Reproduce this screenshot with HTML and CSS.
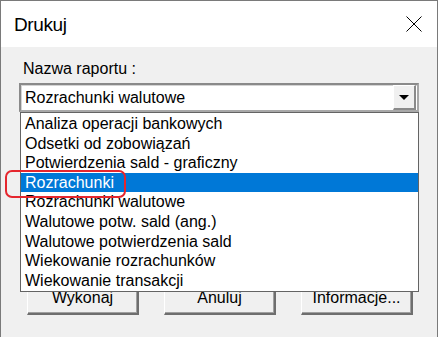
FILE: index.html
```html
<!DOCTYPE html>
<html lang="pl">
<head>
    <meta charset="UTF-8">
    <title>Drukuj</title>
    <link rel="stylesheet" href="styles.css">
</head>
<body>
    <div class="window">
        <div class="titlebar">
            <span class="title">Drukuj</span>
            <svg class="close" width="16" height="16" viewBox="0 0 16 16">
                <path d="M0.5 0.5 L15.5 15.5 M15.5 0.5 L0.5 15.5" stroke="#000" stroke-width="1" fill="none"/>
            </svg>
        </div>

        <div class="dialog">
            <div class="label">Nazwa raportu :</div>

            <div class="combo-wrap">
                <div class="combo">
                    <span class="combo-value">Rozrachunki walutowe</span>
                    <span class="drop-btn">
                        <svg width="10" height="5" viewBox="0 0 10 5"><path d="M0 0 H10 L5 5 Z" fill="#000"/></svg>
                    </span>
                </div>

                <ul class="dropdown">
                    <li>Analiza operacji bankowych</li>
                    <li>Odsetki od zobowiązań</li>
                    <li>Potwierdzenia sald - graficzny</li>
                    <li class="selected">Rozrachunki</li>
                    <li>Rozrachunki walutowe</li>
                    <li>Walutowe potw. sald (ang.)</li>
                    <li>Walutowe potwierdzenia sald</li>
                    <li>Wiekowanie rozrachunków</li>
                    <li>Wiekowanie transakcji</li>
                </ul>
            </div>

            <div class="buttons">
                <button class="btn">Wykonaj</button>
                <button class="btn">Anuluj</button>
                <button class="btn">Informacje...</button>
            </div>
        </div>

        <!-- zaznaczenie -->
        <div class="callout"></div>
    </div>
</body>
</html>
```

FILE: styles.css
```css
* {
    margin: 0;
    padding: 0;
    box-sizing: border-box;
}

body {
    background: #fff;
    font-family: "Liberation Sans", Arial, sans-serif;
    font-size: 16px;
    color: #000;
}

.window {
    position: relative;
    width: 438px;
    height: 337px;
    border: 1px solid #7a7a7a;
    border-bottom: none;
    background: #f0f0f0;
}

.titlebar {
    height: 46px;
    background: #fff;
    display: flex;
    align-items: flex-start;
    justify-content: space-between;
    padding: 12px 15px 0 13px;
}

.title {
    font-size: 19px;
    letter-spacing: -0.4px;
    line-height: 24px;
}

.close {
    margin-top: 3px;
}

.dialog {
    padding: 13px 18px 0 18px;
}

.label {
    line-height: 18px;
    padding-left: 4px;
    margin-bottom: 5px;
}

.combo-wrap {
    position: relative;
    width: 400px;
}

.combo {
    height: 29px;
    display: flex;
    align-items: stretch;
    background: #fff;
    border-style: solid;
    border-width: 2px;
    border-color: #8a8a8a #a8a8a8 #a8a8a8 #8a8a8a;
    box-shadow: inset 1px 1px 0 #d4d4d4;
}

.combo-value {
    flex: 1;
    line-height: 25px;
    padding-left: 4px;
}

.drop-btn {
    width: 23px;
    margin: 0 1px 0 0;
    display: flex;
    align-items: center;
    justify-content: center;
    background: #f0f0f0;
    border-style: solid;
    border-width: 1px 2px 2px 1px;
    border-color: #fff #8a8a8a #8a8a8a #fff;
}

.drop-btn svg {
    margin-top: 1px;
}

.dropdown {
    position: absolute;
    left: 1px;
    top: 29px;
    width: 399px;
    height: 180px;
    list-style: none;
    background: #fff;
    border: 1px solid #646464;
    padding-top: 1px;
    overflow: hidden;
}

.dropdown li {
    line-height: 19.6px;
    height: 19.6px;
    padding-left: 4px;
    white-space: nowrap;
}

.dropdown li.selected {
    background: #0078d7;
    color: #fff;
}

.buttons {
    display: flex;
    gap: 25px;
    margin-top: 169px;
    padding-left: 8px;
}

.btn {
    width: 112px;
    height: 34px;
    font-family: inherit;
    font-size: 16px;
    color: #000;
    background: #f0f0f0;
    border-style: solid;
    border-width: 1px 2px 2px 1px;
    border-color: #fff #6e6e6e #6e6e6e #fff;
    box-shadow: inset -1px -1px 0 #a0a0a0;
}

.callout {
    position: absolute;
    left: 4px;
    top: 169px;
    width: 121px;
    height: 28px;
    border: 2px solid #e5262e;
    border-radius: 7px;
}
```
